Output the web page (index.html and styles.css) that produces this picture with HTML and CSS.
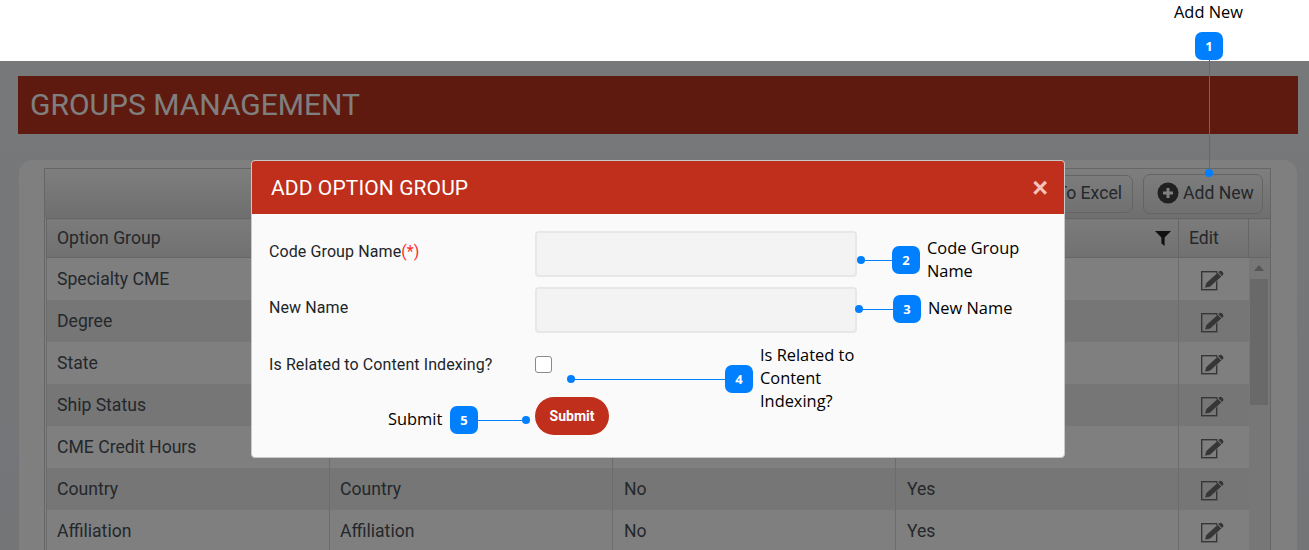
FILE: index.html
```html
<!DOCTYPE html>
<html lang="en">
<head>
<meta charset="utf-8">
<title>Groups Management</title>
<link rel="stylesheet" href="styles.css">
</head>
<body>
<div class="top-band"></div>
<main class="page">
  <h1 class="page-title">GROUPS MANAGEMENT</h1>
  <section class="card">
    <div class="grid">
      <div class="toolbar">
        <button class="tool-btn tool-export" type="button">To Excel</button>
        <button class="tool-btn" type="button">
          <svg class="plus-icon" viewBox="0 0 22 22"><circle cx="11" cy="11" r="10.5" fill="#404040"/><path d="M11 6v10M6 11h10" stroke="#fff" stroke-width="3"/></svg>
          Add New
        </button>
      </div>
      <table class="head-table">
        <colgroup><col class="col-data"><col class="col-data"><col class="col-data"><col class="col-data"><col class="col-edit"><col class="col-scroll"></colgroup>
        <tr>
          <th>Option Group</th>
          <th></th>
          <th></th>
          <th><div class="th-filter">
            <svg class="filter-icon" viewBox="0 0 16 15"><path d="M0 0h16L9.6 6.6V15L6.4 12.4V6.6z" fill="#222"/></svg></div></th>
          <th>Edit</th>
          <th></th>
        </tr>
      </table>
      <div class="grid-body">
        <table class="body-table">
          <colgroup><col class="col-data"><col class="col-data"><col class="col-data"><col class="col-data"><col class="col-edit"></colgroup>
          <tr><td>Specialty CME</td><td></td><td></td><td></td><td class="edit-cell"><svg class="edit-icon" viewBox="0 0 23 22"><use href="#edit"/></svg></td></tr>
          <tr class="alt"><td>Degree</td><td></td><td></td><td></td><td class="edit-cell"><svg class="edit-icon" viewBox="0 0 23 22"><use href="#edit"/></svg></td></tr>
          <tr><td>State</td><td></td><td></td><td></td><td class="edit-cell"><svg class="edit-icon" viewBox="0 0 23 22"><use href="#edit"/></svg></td></tr>
          <tr class="alt"><td>Ship Status</td><td></td><td></td><td></td><td class="edit-cell"><svg class="edit-icon" viewBox="0 0 23 22"><use href="#edit"/></svg></td></tr>
          <tr><td>CME Credit Hours</td><td></td><td></td><td></td><td class="edit-cell"><svg class="edit-icon" viewBox="0 0 23 22"><use href="#edit"/></svg></td></tr>
          <tr class="alt"><td>Country</td><td>Country</td><td class="cell-flag">No</td><td class="cell-flag">Yes</td><td class="edit-cell"><svg class="edit-icon" viewBox="0 0 23 22"><use href="#edit"/></svg></td></tr>
          <tr><td>Affiliation</td><td>Affiliation</td><td class="cell-flag">No</td><td class="cell-flag">Yes</td><td class="edit-cell"><svg class="edit-icon" viewBox="0 0 23 22"><use href="#edit"/></svg></td></tr>
        </table>
        <div class="scrollbar">
          <span class="scroll-up"></span>
          <span class="scroll-thumb"></span>
        </div>
      </div>
    </div>
  </section>
</main>

<svg class="defs" width="0" height="0">
  <symbol id="edit" viewBox="0 0 23 22">
    <rect x="0.7" y="1.7" width="15" height="18" fill="none" stroke="#6c6c6c" stroke-width="1.4"/>
    <path d="M3.6 18 5 13 16.6 2.6 20.6 6.6 9 17z" fill="#6c6c6c" stroke="#fff" stroke-width=".6"/>
    <path d="M18 1.4c1-.9 2.2-.9 3.2.1l.6.7c.9 1 .8 2.2-.1 3.1l-.8.7-3.8-3.9z" fill="#6c6c6c"/>
  </symbol>
</svg>

<div class="overlay"></div>

<div class="modal" role="dialog">
  <header class="modal-head">
    <h2 class="modal-title">ADD OPTION GROUP</h2>
    <span class="modal-close">×</span>
  </header>
  <form class="modal-body">
    <div class="form-row">
      <label class="form-label form-label-up">Code Group Name<span class="req">(*)</span></label>
      <input class="form-input" type="text">
    </div>
    <div class="form-row">
      <label class="form-label form-label-up">New Name</label>
      <input class="form-input" type="text">
    </div>
    <div class="form-row form-row-check">
      <label class="form-label">Is Related to Content Indexing?</label>
      <span class="check-box"></span>
    </div>
    <div class="form-row form-row-submit">
      <span></span>
      <button class="submit-btn" type="button">Submit</button>
    </div>
  </form>
</div>

<div class="note-text note-text-1">Add New</div>
<span class="line line-1"></span><span class="dot dot-1"></span><span class="badge badge-1">1</span>

<span class="line line-2"></span><span class="dot dot-2"></span><span class="badge badge-2">2</span>
<div class="note-text note-text-2">Code Group<br>Name</div>

<span class="line line-3"></span><span class="dot dot-3"></span><span class="badge badge-3">3</span>
<div class="note-text note-text-3">New Name</div>

<span class="line line-4"></span><span class="dot dot-4"></span><span class="badge badge-4">4</span>
<div class="note-text note-text-4">Is Related to<br>Content<br>Indexing?</div>

<span class="line line-5"></span><span class="dot dot-5"></span><span class="badge badge-5">5</span>
<div class="note-text note-text-5">Submit</div>
</body>
</html>
```
FILE: styles.css
```css
* { box-sizing: border-box; }
html, body { margin: 0; padding: 0; }
body {
  position: relative;
  width: 1309px;
  height: 550px;
  overflow: hidden;
  background: #fff;
  font-family: Roboto, "Liberation Sans", sans-serif;
  color: #495057;
}
.top-band { height: 61px; background: #fff; }
.page {
  height: 489px;
  padding: 15px 11px 0 18px;
  background: linear-gradient(#eef1f4, #e6eaef);
  overflow: hidden;
}
.page-title {
  margin: 0 0 26px;
  height: 58px;
  padding-left: 12px;
  background: #bd341c;
  color: #fff;
  font-size: 30px;
  font-weight: 400;
  line-height: 58px;
}
.card {
  margin-left: 1px;
  width: 1278px;
  height: 460px;
  padding: 8px 26px 0 25px;
  background: #fff;
  border-radius: 14px 14px 0 0;
}
.grid { border: 1px solid #ccc; border-bottom: 0; }
.toolbar {
  height: 49px;
  display: flex;
  justify-content: flex-end;
  align-items: center;
  gap: 10px;
  padding: 0 7px 0 0;
  background: linear-gradient(#fdfdfd, #dedede);
}
.tool-btn {
  height: 40px;
  width: 120px;
  display: flex;
  align-items: center;
  gap: 4px;
  padding: 0 0 1px 13px;
  background: transparent;
  border: 1px solid #c8c8c8;
  border-radius: 7px;
  font: 400 17.6px Roboto, sans-serif;
  color: #495057;
  white-space: nowrap;
}
.tool-export { height: 38px; width: 160px; justify-content: flex-end; padding: 0 10px 1px 0; }
.plus-icon { width: 22px; height: 22px; }
table { border-collapse: collapse; table-layout: fixed; }
.col-data { width: 283px; }
.col-edit { width: 70px; }
.col-scroll { width: 22px; }
.head-table { width: 1224px; margin-left: 1px; }
.head-table th {
  height: 39px;
  padding: 0 10px;
  border: 1px solid #cdcdcd;
  background: linear-gradient(#f7f7f7, #e2e2e2);
  font-size: 17.6px;
  font-weight: 400;
  text-align: left;
}
.th-filter { display: flex; justify-content: flex-end; align-items: center; margin-right: -3px; }
.filter-icon { width: 16px; height: 15px; }
.grid-body { display: flex; align-items: flex-start; margin-left: 1px; }
.body-table { width: 1202px; flex: none; }
.body-table td {
  height: 42px;
  padding: 0 10px;
  border-left: 1px solid #d8d8d8;
  background: #fff;
  font-size: 17.6px;
  white-space: nowrap;
}
.body-table td.cell-flag { padding-left: 11px; }
.body-table tr.alt td { background: #ececec; }
.body-table td.edit-cell { padding: 0; }
.edit-icon { display: block; width: 23px; height: 22px; margin: 4px 0 0 22px; }
.scrollbar {
  position: relative;
  width: 22px;
  height: 300px;
  background: #eeeeee;
  display: flex;
  flex-direction: column;
  align-items: center;
}
.scroll-up {
  margin-top: 7px;
  width: 0;
  height: 0;
  border-left: 5px solid transparent;
  border-right: 5px solid transparent;
  border-bottom: 6px solid #aaa;
}
.scroll-thumb {
  margin-top: 8px;
  width: 18px;
  height: 126px;
  background: #d2d2d2;
}
.defs { position: absolute; }

.overlay {
  position: absolute;
  left: 0;
  right: 0;
  top: 61px;
  bottom: 0;
  background: rgba(0, 0, 0, .5);
}

.modal {
  position: absolute;
  left: 251px;
  top: 160px;
  width: 814px;
  height: 298px;
  background: #fafafa;
  border: 1px solid #c9c9c9;
  border-radius: 4px;
  overflow: hidden;
}
.modal-head {
  height: 53px;
  display: flex;
  align-items: center;
  justify-content: space-between;
  padding: 0 16px 0 19px;
  background: #bf2f1b;
}
.modal-title {
  margin: 0;
  color: #fff;
  font-size: 21px;
  font-weight: 400;
  letter-spacing: .1px;
}
.modal-close {
  color: #f4c4bb;
  font-family: "Liberation Sans", sans-serif;
  font-size: 27px;
  font-weight: 700;
  line-height: 30px;
}
.modal-body { padding: 17px 0 0 17px; }
.form-row {
  display: grid;
  grid-template-columns: 266px 322px;
  align-items: center;
  margin-bottom: 10px;
}
.form-label { font-size: 16px; letter-spacing: .1px; color: #212529; }
.form-label-up { margin-bottom: 6px; }
.req { color: #ff2a2a; }
.form-input {
  height: 46px;
  width: 322px;
  background: #f3f3f3;
  border: 2px solid #e7e7e7;
  border-radius: 4px;
}
.form-row-check { height: 34px; margin: 14px 0 16px; }
.check-box {
  width: 17px;
  height: 17px;
  background: #fff;
  border: 1.5px solid #8a8a8a;
  border-radius: 3px;
}
.submit-btn {
  width: 74px;
  height: 38px;
  padding: 0;
  background: #bf2f1b;
  border: 0;
  border-radius: 19px;
  color: #fff;
  font: 700 14px Roboto, sans-serif;
}

.badge {
  position: absolute;
  width: 28px;
  height: 28px;
  background: #007fff;
  border-radius: 7px;
  color: #fff;
  font: 700 13px/28px "Open Sans", sans-serif;
  text-align: center;
}
.line { position: absolute; background: #007fff; }
.dot { position: absolute; width: 8px; height: 8px; border-radius: 50%; background: #007fff; }
.note-text {
  position: absolute;
  font: 400 16.4px/23px "Open Sans", sans-serif;
  color: #000;
  white-space: nowrap;
}

.badge-1 { left: 1195px; top: 32px; }
.line-1 { left: 1209px; top: 60px; width: 1px; height: 112px; }
.dot-1 { left: 1205px; top: 169px; }
.note-text-1 { left: 1174px; top: 0; }

.badge-2 { left: 892px; top: 246px; }
.line-2 { left: 861px; top: 260px; width: 31px; height: 1px; }
.dot-2 { left: 857px; top: 256px; }
.note-text-2 { left: 927px; top: 236px; }

.badge-3 { left: 893px; top: 295px; }
.line-3 { left: 859px; top: 309px; width: 34px; height: 1px; }
.dot-3 { left: 855px; top: 305px; }
.note-text-3 { left: 928px; top: 296px; }

.badge-4 { left: 725px; top: 365px; }
.line-4 { left: 571px; top: 379px; width: 154px; height: 1px; }
.dot-4 { left: 567px; top: 375px; }
.note-text-4 { left: 760px; top: 343px; }

.badge-5 { left: 450px; top: 406px; }
.line-5 { left: 478px; top: 420px; width: 48px; height: 1px; }
.dot-5 { left: 522px; top: 416px; }
.note-text-5 { left: 388px; top: 407px; }
```
